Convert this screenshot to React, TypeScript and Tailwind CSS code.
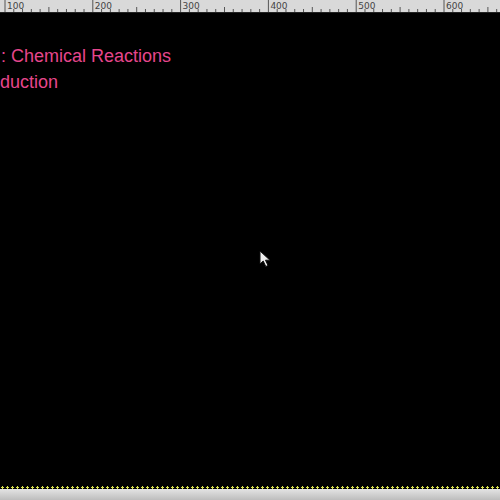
import React from 'react';

const RULER_START = 5;
const STEP = 87.8; // px per 100 units

const Ruler: React.FC = () => {
  const ticks = [];
  for (let i = -2; i < 60; i++) {
    const x = RULER_START + (STEP / 10) * i;
    if (x < 0 || x > 500) continue;
    const major = i % 10 === 0;
    const mid = !major && i % 5 === 0;
    const h = major ? 12 : mid ? 5 : 3;
    ticks.push(<line key={i} x1={x} x2={x} y1={12 - h} y2={12} stroke="#555" strokeWidth={1} />);
  }
  const labels = [100, 200, 300, 400, 500, 600];
  return (
    <div className="h-[13px] w-full bg-[#d9d9d9] border-b border-[#222]">
      <svg width="500" height="12" className="block">
        {ticks}
        {labels.map((l, k) => (
          <text
            key={l}
            x={RULER_START + STEP * k + 2}
            y={9}
            fontSize="9"
            fill="#444"
            fontFamily="'DejaVu Sans', sans-serif"
          >
            {l}
          </text>
        ))}
      </svg>
    </div>
  );
};

const Cursor: React.FC = () => (
  <svg className="absolute left-[259px] top-[237px]" width="13" height="18" viewBox="0 0 13 18">
    <path d="M1 1 L1 14 L4.2 11 L6.8 16.5 L9 15.5 L6.5 10.2 L11 10.2 Z" fill="#eee" stroke="#111" strokeWidth="1" strokeLinejoin="round" />
  </svg>
);

export default function App() {
  return (
    <div className="w-[500px] h-[500px] flex flex-col bg-black overflow-hidden">
      <Ruler />
      <div className="relative flex-1 bg-black">
        <div className="pt-[30px] text-[#e6468c] text-[18px] leading-[26px] font-['Liberation_Sans',sans-serif]">
          <div className="pl-[1px]">: Chemical Reactions</div>
          <div>duction</div>
        </div>
        <Cursor />
      </div>
      <div className="h-[3px] bg-black bg-[radial-gradient(circle,#d8e04a_1px,transparent_1.2px)] bg-[length:5px_3px]" />
      <div className="h-[11px] bg-gradient-to-b from-[#e4e4e4] to-[#bdbdbd]" />
    </div>
  );
}
